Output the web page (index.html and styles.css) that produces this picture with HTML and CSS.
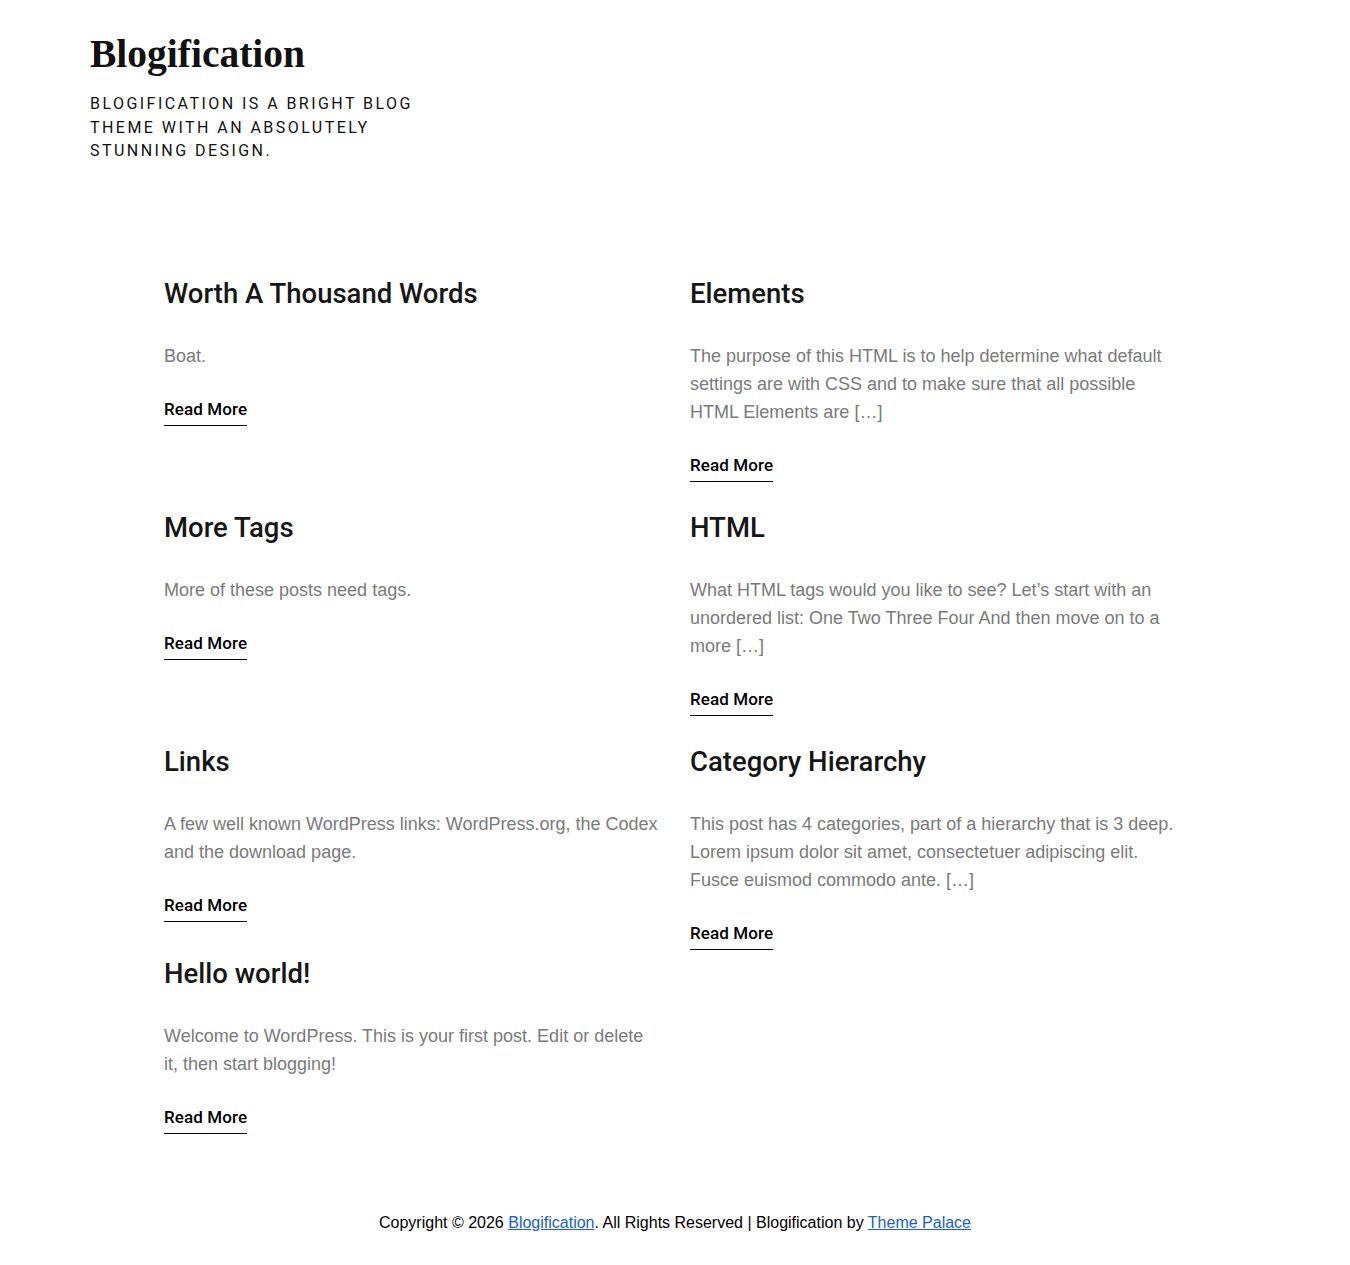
FILE: index.html
```html
<!DOCTYPE html>
<html lang="en">
<head>
<meta charset="utf-8">
<title>Blogification</title>
<link rel="stylesheet" href="styles.css">
</head>
<body>
<header class="site-header">
  <h1 class="site-title">Blogification</h1>
  <p class="site-description">Blogification is a bright blog theme with an absolutely stunning design.</p>
</header>
<main class="posts">
  <article class="post">
    <h2 class="post-title">Worth A Thousand Words</h2>
    <p class="post-excerpt">Boat.</p>
    <a class="read-more" href="#">Read More</a>
  </article>
  <article class="post">
    <h2 class="post-title">Elements</h2>
    <p class="post-excerpt">The purpose of this HTML is to help determine what default settings are with CSS and to make sure that all possible HTML Elements are […]</p>
    <a class="read-more" href="#">Read More</a>
  </article>
  <article class="post">
    <h2 class="post-title">More Tags</h2>
    <p class="post-excerpt">More of these posts need tags.</p>
    <a class="read-more" href="#">Read More</a>
  </article>
  <article class="post">
    <h2 class="post-title">HTML</h2>
    <p class="post-excerpt">What HTML tags would you like to see? Let’s start with an unordered list: One Two Three Four And then move on to a more […]</p>
    <a class="read-more" href="#">Read More</a>
  </article>
  <article class="post">
    <h2 class="post-title">Links</h2>
    <p class="post-excerpt">A few well known WordPress links: WordPress.org, the Codex and the download page.</p>
    <a class="read-more" href="#">Read More</a>
  </article>
  <article class="post">
    <h2 class="post-title">Category Hierarchy</h2>
    <p class="post-excerpt">This post has 4 categories, part of a hierarchy that is 3 deep. Lorem ipsum dolor sit amet, consectetuer adipiscing elit. Fusce euismod commodo ante. […]</p>
    <a class="read-more" href="#">Read More</a>
  </article>
  <article class="post post-last">
    <h2 class="post-title">Hello world!</h2>
    <p class="post-excerpt">Welcome to WordPress. This is your first post. Edit or delete it, then start blogging!</p>
    <a class="read-more" href="#">Read More</a>
  </article>
</main>
<footer class="site-footer">
  <p class="copyright">Copyright © 2026 <a href="#">Blogification</a>. All Rights Reserved | Blogification by <a href="#">Theme Palace</a></p>
</footer>
</body>
</html>
```

FILE: styles.css
```css
html, body {
  margin: 0;
  padding: 0;
  background: #fff;
}

body {
  font-family: "Liberation Sans", Arial, sans-serif;
  color: #111;
}

.site-header {
  padding: 32px 90px 0;
}

.site-title {
  margin: 0;
  font-family: "Liberation Serif", "Times New Roman", serif;
  font-weight: 700;
  font-size: 39.5px;
  line-height: 44px;
  color: #111;
}

.site-description {
  margin: 16px 0 0;
  max-width: 340px;
  font-family: Roboto, "Noto Sans", sans-serif;
  font-size: 16px;
  line-height: 23.5px;
  letter-spacing: 2.45px;
  text-transform: uppercase;
  color: #111;
}

.posts {
  width: 1022px;
  margin: 113px auto 0;
  display: flow-root;
}

.post {
  float: left;
  width: 496px;
  margin-bottom: 28px;
}

.post:nth-child(even) {
  float: right;
}

.post:nth-child(3),
.post:nth-child(5) {
  clear: both;
}

.post-last {
  margin-top: 6px;
}

.post-title {
  margin: 0;
  font-family: Roboto, "Noto Sans", sans-serif;
  font-weight: 500;
  font-size: 27.5px;
  line-height: 36px;
  color: #161616;
}

.post-excerpt {
  margin: 30px 0 0;
  font-size: 18px;
  line-height: 28px;
  color: #7a7a7a;
}

.read-more {
  display: inline-block;
  margin-top: 29px;
  padding-bottom: 6px;
  border-bottom: 1px solid #000;
  font-family: Roboto, "Noto Sans", sans-serif;
  font-weight: 500;
  font-size: 17px;
  line-height: 20px;
  letter-spacing: 0.1px;
  color: #000;
  text-decoration: none;
}

.site-footer {
  padding: 49px 0 28px;
  text-align: center;
}

.copyright {
  margin: 0;
  font-size: 16px;
  line-height: 24px;
  color: #000;
}

.copyright a {
  color: #1a5fc8;
}
```
